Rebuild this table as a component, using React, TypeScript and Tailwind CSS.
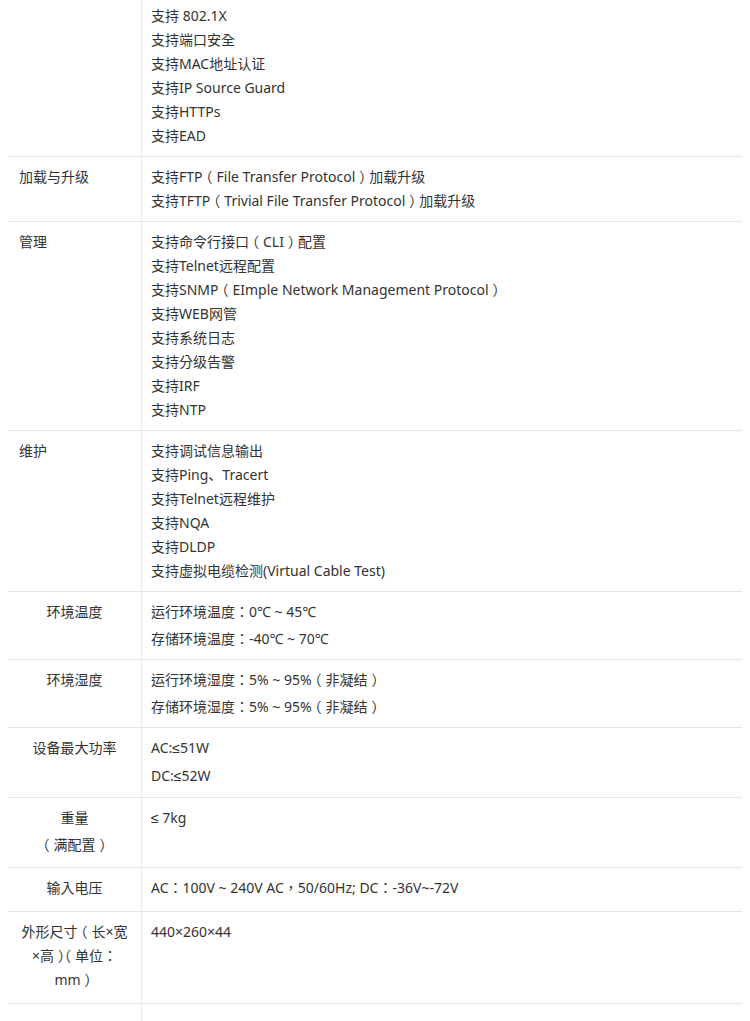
import React from "react";

type Row = {
  label: React.ReactNode;
  lines: string[];
  center?: boolean;
  gap?: string;
  pb?: string;
};

// YaHei-style punctuation: fullwidth parens drawn centred, 、 low-left
function Txt({ s }: { s: string }) {
  const parts = s.split(/([（）、])/);
  return (
    <>
      {parts.map((p, i) => {
        if (p === "（") return <span key={i} className="-ml-[4px] mr-[4px]">（</span>;
        if (p === "）") return <span key={i} className="ml-[4px] -mr-[4px]">）</span>;
        if (p === "、")
          return (
            <span key={i} className="leading-none" style={{ fontFamily: '"Noto Sans CJK SC", sans-serif' }}>
              、
            </span>
          );
        return <React.Fragment key={i}>{p}</React.Fragment>;
      })}
    </>
  );
}

const rows: Row[] = [
  {
    label: "",
    lines: ["支持 RADIUS", "支持 802.1X", "支持端口安全", "支持MAC地址认证", "支持IP Source Guard", "支持HTTPs", "支持EAD"],
  },
  {
    label: "加载与升级",
    lines: [
      "支持FTP（File Transfer Protocol）加载升级",
      "支持TFTP（Trivial File Transfer Protocol）加载升级",
    ],
  },
  {
    label: "管理",
    lines: [
      "支持命令行接口（CLI）配置",
      "支持Telnet远程配置",
      "支持SNMP（EImple Network Management Protocol）",
      "支持WEB网管",
      "支持系统日志",
      "支持分级告警",
      "支持IRF",
      "支持NTP",
    ],
  },
  {
    label: "维护",
    lines: [
      "支持调试信息输出",
      "支持Ping、Tracert",
      "支持Telnet远程维护",
      "支持NQA",
      "支持DLDP",
      "支持虚拟电缆检测(Virtual Cable Test)",
    ],
  },
  {
    label: "环境温度",
    center: true,
    gap: "gap-[3px]",
    lines: ["运行环境温度：0℃ ~ 45℃", "存储环境温度：-40℃ ~ 70℃"],
  },
  {
    label: "环境湿度",
    center: true,
    gap: "gap-[3px]",
    lines: ["运行环境湿度：5% ~ 95%（非凝结）", "存储环境湿度：5% ~ 95%（非凝结）"],
  },
  {
    label: "设备最大功率",
    center: true,
    gap: "gap-[4px]",
    pb: "pb-[9px]",
    lines: ["AC:≤51W", "DC:≤52W"],
  },
  {
    label: (
      <div className="flex flex-col gap-[3px]">
        <span className="block h-6">
          <Txt s="重量" />
        </span>
        <span className="block h-6">
          <Txt s="（满配置）" />
        </span>
      </div>
    ),
    center: true,
    pb: "pb-[10px]",
    lines: ["≤ 7kg"],
  },
  {
    label: "输入电压",
    center: true,
    pb: "pb-[11px]",
    lines: ["AC：100V ~ 240V AC，50/60Hz; DC：-36V~-72V"],
  },
  {
    label: (
      <>
        <span className="block h-6"><Txt s="外形尺寸（长×宽" /></span>
        <span className="block h-6"><Txt s="×高）（单位：" /></span>
        <span className="block h-6"><Txt s="mm）" /></span>
      </>
    ),
    center: true,
    pb: "pb-[11px]",
    lines: ["440×260×44"],
  },
];

export default function App() {
  return (
    <div
      className="min-h-screen bg-white text-[14px] leading-[24px] text-[#333] overflow-hidden"
      style={{ fontFamily: '"Noto Sans", "Liberation Sans", "Noto Sans CJK TC", sans-serif' }}
    >
      <div className="ml-2 mr-2 -mt-[29px]">
        {rows.map((r, i) => (
          <div key={i} className="grid grid-cols-[134px_1fr] border-t border-[#e5e5e5]">
            <div
              className={`border-r border-[#ebebeb] pt-2 ${r.pb ?? "pb-2"} ${
                r.center ? "text-center px-2" : "pl-[11px]"
              }`}
            >
              {typeof r.label === "string" ? <Txt s={r.label} /> : r.label}
            </div>
            <div className={`flex flex-col pl-[9px] pt-2 ${r.pb ?? "pb-2"} ${r.gap ?? ""}`}>
              {r.lines.map((l, j) => (
                <span key={j} className="block h-6">
                  <Txt s={l} />
                </span>
              ))}
            </div>
          </div>
        ))}
        <div className="grid grid-cols-[134px_1fr] border-t border-[#e5e5e5]">
          <div className="h-6 border-r border-[#ebebeb]" />
          <div />
        </div>
      </div>
    </div>
  );
}
